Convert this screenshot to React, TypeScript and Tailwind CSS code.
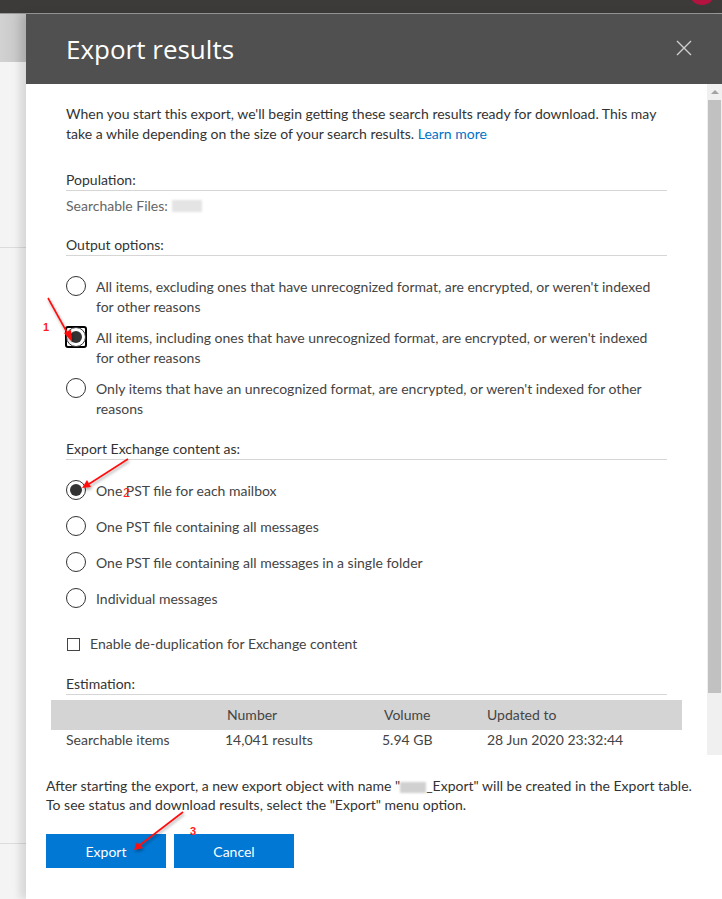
import React from "react";

const F = { fontFamily: '"Lato", "Liberation Sans", sans-serif' };

function RadioItem({ checked, focus, children }: { checked?: boolean; focus?: boolean; children: React.ReactNode }) {
  return (
    <div className="flex items-start gap-[10px]">
      <div className="flex h-[20px] w-[20px] items-center justify-center -mt-[1px]">
        {focus ? (
          <div className="flex h-[22px] w-[22px] items-center justify-center rounded-[3px] border-2 border-black">
            <div className="flex h-[20px] w-[20px] shrink-0 items-center justify-center rounded-full border border-[#333] bg-white">
              {checked && <div className="h-[12px] w-[12px] rounded-full bg-[#333]" />}
            </div>
          </div>
        ) : (
          <div className="flex h-[20px] w-[20px] shrink-0 items-center justify-center rounded-full border border-[#333] bg-white">
            {checked && <div className="h-[12px] w-[12px] rounded-full bg-[#333]" />}
          </div>
        )}
      </div>
      <div className="text-[14px] leading-[20px] text-[#444] whitespace-nowrap">{children}</div>
    </div>
  );
}

function Heading({ children }: { children: React.ReactNode }) {
  return (
    <div className="border-b border-[#d6d6d6] text-[14px] leading-[20px] text-[#333]">{children}</div>
  );
}

export default function App() {
  return (
    <div className="relative flex h-[899px] w-[722px] flex-col overflow-hidden bg-[#f0f0f0]" style={F}>
      {/* top app bar */}
      <div className="h-[14px] shrink-0 border-b border-[#9a9a9a] bg-[#3d3b39]" />
      <div className="absolute right-[7px] top-[-21px] h-[26px] w-[26px] rounded-full bg-[#b3133f]" />

      <div className="flex flex-1">
        {/* backdrop left */}
        <div className="flex w-[26px] shrink-0 flex-col">
          <div className="h-[48px] bg-gradient-to-r from-[#d2d2d2] to-[#c4c4c4]" />
          <div className="h-[186px] border-b border-[#dcdcdc] bg-[#f4f4f4]" />
          <div className="h-[596px] border-b border-[#dcdcdc] bg-[#f4f4f4]" />
          <div className="flex-1 bg-[#f4f4f4]" />
        </div>

        {/* panel */}
        <div className="relative flex flex-1 flex-col bg-white shadow-[-6px_0_8px_rgba(0,0,0,0.12)]">
          <div className="flex h-[70px] shrink-0 items-center justify-between bg-[#505050] pl-[40px] pr-[30px]">
            <div className="text-[26px] leading-[30px] text-white" style={{ fontFamily: '"Open Sans", "Lato", sans-serif', fontWeight: 400 }}>
              Export results
            </div>
            <svg width="16" height="16" viewBox="0 0 16 16" className="-mt-[3px]">
              <path d="M1 1 L15 15 M15 1 L1 15" stroke="#cfcfcf" strokeWidth="1.4" fill="none" />
            </svg>
          </div>

          {/* body */}
          <div className="flex h-[671px] shrink-0">
            <div className="flex flex-1 flex-col px-[40px] pt-[20px]">
              <div className="text-[14px] leading-[20px] text-[#333] whitespace-nowrap">
                When you start this export, we'll begin getting these search results ready for download. This may
                <br />
                take a while depending on the size of your search results. <span className="text-[#0072c6]">Learn more</span>
              </div>

              <div className="mt-[26px]">
                <Heading>Population:</Heading>
              </div>
              <div className="mt-[5px] flex items-center text-[14px] leading-[20px] text-[#666]">
                Searchable Files:
                <span className="ml-[4px] inline-block h-[12px] w-[30px] bg-[#e4e4e4] blur-[1px]" />
              </div>

              <div className="mt-[19px]">
                <Heading>Output options:</Heading>
              </div>
              <div className="mt-[21px] flex flex-col gap-[11px]">
                <RadioItem>
                  All items, excluding ones that have unrecognized format, are encrypted, or weren't indexed
                  <br />
                  for other reasons
                </RadioItem>
                <RadioItem checked focus>
                  All items, including ones that have unrecognized format, are encrypted, or weren't indexed
                  <br />
                  for other reasons
                </RadioItem>
                <RadioItem>
                  Only items that have an unrecognized format, are encrypted, or weren't indexed for other
                  <br />
                  reasons
                </RadioItem>
              </div>

              <div className="mt-[20px]">
                <Heading>Export Exchange content as:</Heading>
              </div>
              <div className="mt-[21px] flex flex-col gap-[16px]">
                <RadioItem checked>One PST file for each mailbox</RadioItem>
                <RadioItem>One PST file containing all messages</RadioItem>
                <RadioItem>One PST file containing all messages in a single folder</RadioItem>
                <RadioItem>Individual messages</RadioItem>
              </div>

              <div className="mt-[25px] flex items-center gap-[10px] pl-[1px]">
                <div className="h-[13px] w-[13px] border border-[#444] bg-white" />
                <div className="text-[14px] leading-[20px] text-[#444]">Enable de-duplication for Exchange content</div>
              </div>

              <div className="mt-[20px]">
                <Heading>Estimation:</Heading>
              </div>
              <div className="-mx-[15px] mt-[5px]">
                <div className="grid h-[30px] grid-cols-[159px_159px_103px_1fr] items-center bg-[#d4d4d4] pl-[15px] text-[14px] leading-[20px] text-[#444]">
                  <div />
                  <div className="pl-[2px]">Number</div>
                  <div>Volume</div>
                  <div>Updated to</div>
                </div>
                <div className="grid h-[20px] grid-cols-[159px_157px_105px_1fr] items-center pl-[15px] text-[14px] leading-[20px] text-[#444]">
                  <div>Searchable items</div>
                  <div>14,041 results</div>
                  <div>5.94 GB</div>
                  <div>28 Jun 2020 23:32:44</div>
                </div>
              </div>
            </div>

            {/* scrollbar */}
            <div className="flex w-[15px] shrink-0 flex-col bg-[#f0f0f0]">
              <div className="flex h-[16px] items-center justify-center">
                <div className="h-0 w-0 border-x-[4px] border-b-[4px] border-x-transparent border-b-[#a3a3a3]" />
              </div>
              <div className="mx-px h-[593px] bg-[#c1c1c1]" />
              <div className="flex-1" />
            </div>
          </div>

          {/* footer */}
          <div className="flex flex-1 flex-col bg-white pl-[20px] pt-[21px]">
            <div className="text-[14px] leading-[19px] text-[#333] whitespace-nowrap">
              After starting the export, a new export object with name "
              <span className="inline-block h-[11px] w-[26px] bg-[#d0d0d0] blur-[1px] align-middle" />
              _Export" will be created in the Export table.
              <br />
              To see status and download results, select the "Export" menu option.
            </div>
            <div className="mt-[20px] flex gap-[8px]">
              <button className="h-[34px] w-[120px] bg-[#0078d4] text-[14px] text-white">Export</button>
              <button className="h-[34px] w-[120px] bg-[#0078d4] text-[14px] text-white">Cancel</button>
            </div>
          </div>
        </div>
      </div>

      {/* red annotations */}
      <svg className="pointer-events-none absolute left-0 top-0" width="722" height="899">
        <defs>
          <filter id="sh" x="-20%" y="-20%" width="140%" height="140%">
            <feDropShadow dx="1" dy="2" stdDeviation="1.5" floodColor="#000" floodOpacity="0.35" />
          </filter>
        </defs>
        <g filter="url(#sh)" stroke="#ff1010" fill="#ff1010">
          <line x1="48" y1="298" x2="69" y2="336" strokeWidth="1.6" />
          <polygon points="72,342 64,333 71,330" stroke="none" />
          <line x1="128" y1="459" x2="89" y2="484" strokeWidth="1.6" />
          <polygon points="82,488 87,480 91,487" stroke="none" />
          <line x1="183" y1="812" x2="140" y2="845" strokeWidth="1.6" />
          <polygon points="134,850 137,842 143,848" stroke="none" />
        </g>
        <text x="43" y="331" fill="#ff2020" fontSize="11" fontWeight="700" fontFamily="Liberation Sans, sans-serif">1</text>
        <text x="123" y="497" fill="#ff2020" fontSize="13" fontFamily="Liberation Sans, sans-serif">2</text>
        <text x="190" y="835" fill="#ff2020" fontSize="11" fontWeight="700" fontFamily="Liberation Sans, sans-serif">3</text>
      </svg>
    </div>
  );
}
